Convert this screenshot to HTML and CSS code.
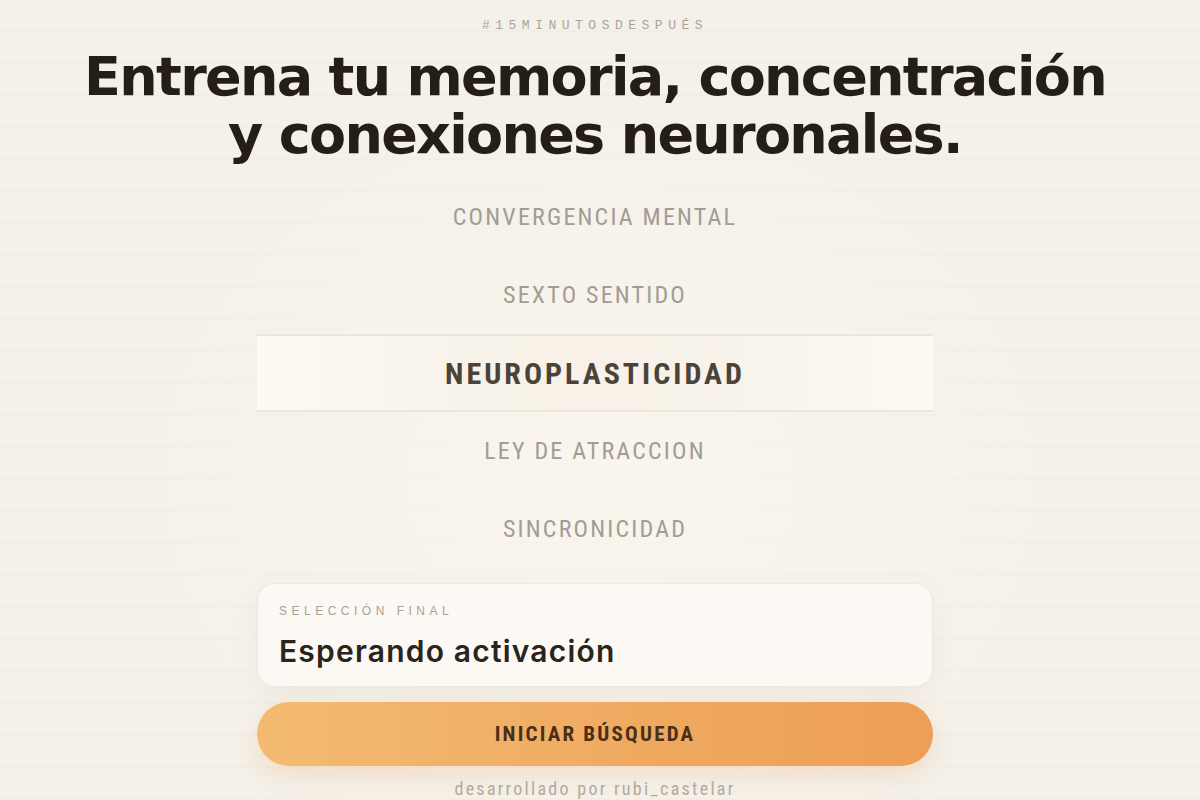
FILE: index.html
```html
<!DOCTYPE html>
<html lang="es">
<head>
<meta charset="utf-8">
<title>#15minutosdespués</title>
<link rel="stylesheet" href="styles.css">
</head>
<body>
<main class="page">
  <p class="tag">#15MINUTOSDESPUÉS</p>
  <h1 class="title">Entrena tu memoria, concentración<br>y conexiones neuronales.</h1>
  <ul class="wheel">
    <li class="item">CONVERGENCIA MENTAL</li>
    <li class="item">SEXTO SENTIDO</li>
    <li class="item item-active">NEUROPLASTICIDAD</li>
    <li class="item">LEY DE ATRACCION</li>
    <li class="item">SINCRONICIDAD</li>
  </ul>
  <section class="result">
    <p class="result-label">SELECCIÓN FINAL</p>
    <p class="result-value">Esperando activación</p>
  </section>
  <button class="start">INICIAR BÚSQUEDA</button>
  <p class="credit">desarrollado por rubi_castelar</p>
</main>
</body>
</html>
```
FILE: styles.css
```css
* { box-sizing: border-box; }
html, body { margin: 0; padding: 0; height: 100%; }
body {
  background-color: #f4f1ea;
  background-image:
    radial-gradient(ellipse at 50% 60%, rgba(250,246,238,0.9) 0%, rgba(244,241,234,0) 60%),
    repeating-linear-gradient(to bottom, rgba(0,0,0,0) 0px, rgba(0,0,0,0) 30px, rgba(120,110,90,0.025) 30px, rgba(120,110,90,0.025) 32px);
  font-family: "Liberation Sans", Arial, sans-serif;
  overflow: hidden;
}
.page {
  display: flex;
  flex-direction: column;
  align-items: center;
  padding-top: 17px;
  padding-right: 10px;
}
.tag {
  margin: 0;
  font-family: "Liberation Mono", "DejaVu Sans Mono", monospace;
  font-size: 13px;
  letter-spacing: 5.5px;
  color: #aaa49b;
  line-height: 18px;
}
.title {
  margin: 13px 0 0;
  font-family: "DejaVu Sans", sans-serif;
  font-weight: bold;
  font-size: 54px;
  line-height: 58px;
  letter-spacing: -1.7px;
  text-align: center;
  color: #241e15;
}
.wheel {
  list-style: none;
  margin: 14px 0 0;
  padding: 0;
  width: 676px;
  display: flex;
  flex-direction: column;
}
.item {
  height: 78px;
  display: flex;
  align-items: center;
  justify-content: center;
  font-family: "Roboto Condensed", "Liberation Sans Narrow", "Liberation Sans", sans-serif;
  font-size: 24px;
  color: #a29c92;
  letter-spacing: 2.2px;
}
.item-active {
  font-size: 30px;
  font-weight: bold;
  letter-spacing: 3px;
  color: #4b4338;
  background: linear-gradient(to right, #fdfaf4 0%, #f8f3ea 30%, #f7f1e7 50%, #f8f3ea 70%, #fdfaf4 100%);
  border-top: 2px solid #ebe6dc;
  border-bottom: 2px solid #ebe6dc;
}
.result {
  margin-top: 15px;
  width: 676px;
  background: #fcf8f3;
  border: 1px solid #eee8df;
  border-radius: 18px;
  padding: 19px 21px 17px;
  box-shadow: 0 8px 24px rgba(150,130,100,0.08);
}
.result-label {
  margin: 0;
  font-family: "Liberation Sans", sans-serif;
  font-size: 12px;
  letter-spacing: 4.5px;
  color: #aaa296;
  line-height: 16px;
}
.result-value {
  margin: 14px 0 0;
  font-family: Inter, Roboto, "Liberation Sans", sans-serif;
  font-weight: 600;
  font-size: 30px;
  line-height: 36px;
  letter-spacing: 1.2px;
  color: #2a241c;
}
.start {
  margin-top: 15px;
  width: 676px;
  height: 64px;
  border: none;
  border-radius: 32px;
  background: linear-gradient(to right, #f3bb71 0%, #efa95f 60%, #ee9e56 100%);
  box-shadow: 0 10px 26px rgba(239,160,90,0.25);
  font-family: "Roboto Condensed", "Liberation Sans Narrow", "Liberation Sans", sans-serif;
  font-weight: bold;
  font-size: 21px;
  letter-spacing: 2.2px;
  color: #4a2e17;
}
.credit {
  margin: 13px 0 0;
  font-family: "Roboto Condensed", "Liberation Sans", sans-serif;
  font-size: 18px;
  line-height: 20px;
  letter-spacing: 2.3px;
  color: #b2aa9f;
}
```
